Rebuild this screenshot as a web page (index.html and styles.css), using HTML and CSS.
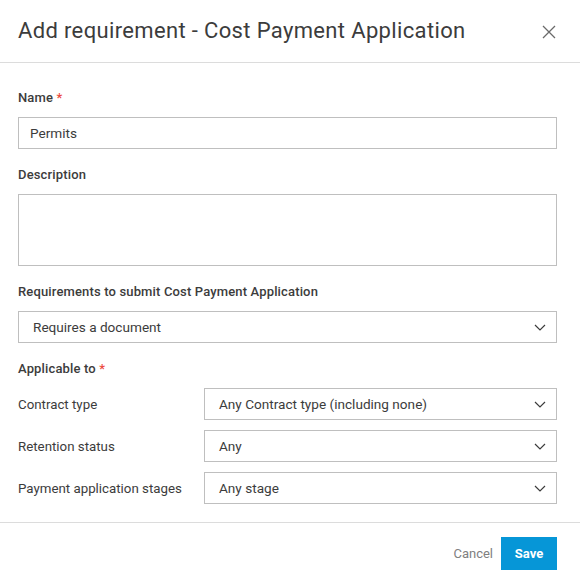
FILE: index.html
```html
<!DOCTYPE html>
<html lang="en">
<head>
<meta charset="utf-8">
<title>Add requirement</title>
<link rel="stylesheet" href="styles.css">
</head>
<body>
<div class="dialog">
  <header class="dialog-header">
    <h1 class="dialog-title">Add requirement - Cost Payment Application</h1>
    <button class="close-btn" aria-label="Close">
      <svg width="14" height="14" viewBox="0 0 14 14"><path d="M1 1 L13 13 M13 1 L1 13" stroke="#6a6a6a" stroke-width="1.3" fill="none"/></svg>
    </button>
  </header>
  <main class="dialog-body">
    <div class="field">
      <label class="field-label">Name <span class="req">*</span></label>
      <div class="input">Permits</div>
    </div>
    <div class="field">
      <label class="field-label">Description</label>
      <div class="textarea"></div>
    </div>
    <div class="field">
      <label class="field-label">Requirements to submit Cost Payment Application</label>
      <div class="select"><span>Requires a document</span>
        <svg class="chev" width="12" height="7" viewBox="0 0 12 7"><path d="M1 1 L6 6 L11 1" stroke="#3c3c3c" stroke-width="1.2" fill="none"/></svg>
      </div>
    </div>
    <div class="field last">
      <label class="field-label">Applicable to <span class="req">*</span></label>
      <div class="rows">
        <span class="row-label">Contract type</span>
        <div class="select"><span>Any Contract type (including none)</span>
          <svg class="chev" width="12" height="7" viewBox="0 0 12 7"><path d="M1 1 L6 6 L11 1" stroke="#3c3c3c" stroke-width="1.2" fill="none"/></svg>
        </div>
        <span class="row-label">Retention status</span>
        <div class="select"><span>Any</span>
          <svg class="chev" width="12" height="7" viewBox="0 0 12 7"><path d="M1 1 L6 6 L11 1" stroke="#3c3c3c" stroke-width="1.2" fill="none"/></svg>
        </div>
        <span class="row-label">Payment application stages</span>
        <div class="select"><span>Any stage</span>
          <svg class="chev" width="12" height="7" viewBox="0 0 12 7"><path d="M1 1 L6 6 L11 1" stroke="#3c3c3c" stroke-width="1.2" fill="none"/></svg>
        </div>
      </div>
    </div>
  </main>
  <footer class="dialog-footer">
    <button class="btn-cancel">Cancel</button>
    <button class="btn-save">Save</button>
  </footer>
</div>
</body>
</html>
```
FILE: styles.css
```css
* { box-sizing: border-box; }
html, body { margin: 0; padding: 0; background: #fff; }
body {
  font-family: Roboto, "Noto Sans", "Liberation Sans", sans-serif;
  color: #3c3c3c;
  width: 580px;
}
.dialog { width: 580px; }
.dialog-header {
  height: 63px;
  border-bottom: 1px solid #dcdcdc;
  display: flex;
  align-items: center;
  justify-content: space-between;
  padding: 0 24px 0 18px;
}
.dialog-title {
  margin: 0;
  font-size: 22px;
  font-weight: 400;
  color: #3c3c3c;
  letter-spacing: 0.35px;
  margin-top: -1px;
}
.close-btn {
  border: 0;
  background: none;
  padding: 0;
  width: 14px;
  height: 14px;
  display: flex;
  margin-top: 1px;
}
.dialog-body {
  padding: 26px 23px 0 18px;
}
.field { margin-bottom: 17px; }
.field.last { margin-bottom: 18px; }
.field-label {
  display: block;
  font-size: 13px;
  line-height: 18px;
  font-weight: 500;
  letter-spacing: 0.15px;
  margin-bottom: 10px;
  color: #3c3c3c;
}
.req { color: #ec4a41; }
.input, .select, .textarea {
  border: 1px solid #bfbfbf;
  background: #fff;
  font-size: 13.6px;
  color: #3c3c3c;
}
.input {
  height: 32px;
  display: flex;
  align-items: center;
  padding: 0 11px;
}
.textarea { height: 72px; }
.select {
  height: 32px;
  display: flex;
  align-items: center;
  justify-content: space-between;
  padding: 0 10px 0 14px;
}
.chev { display: block; }
.rows {
  display: grid;
  grid-template-columns: 186px 1fr;
  row-gap: 10px;
  align-items: center;
}
.row-label { font-size: 13.3px; }
.dialog-footer {
  border-top: 1px solid #dcdcdc;
  display: flex;
  justify-content: flex-end;
  align-items: center;
  gap: 8px;
  padding: 14px 23px 12px 18px;
}
.btn-cancel {
  border: 0;
  background: none;
  font-family: inherit;
  font-size: 13px;
  color: #808080;
  padding: 0;
}
.btn-save {
  border: 0;
  background: #0696d7;
  color: #fff;
  font-family: inherit;
  font-size: 13px;
  font-weight: 700;
  width: 56px;
  height: 33px;
  padding: 0;
}
```
